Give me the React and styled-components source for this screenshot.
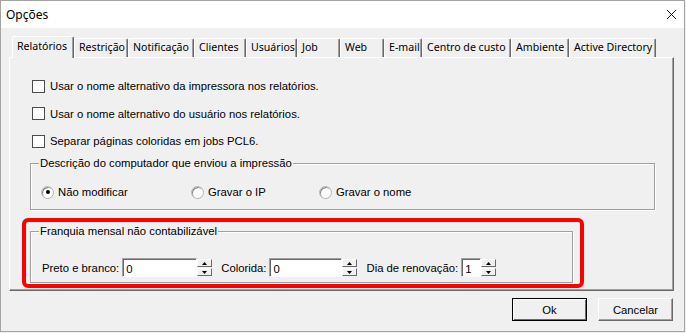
import React from 'react'
import styled, { createGlobalStyle } from 'styled-components'

const GlobalStyle = createGlobalStyle`
  html, body {
    margin: 0;
    padding: 0;
    background: #f0f0f0;
  }
`

const tabs = [
  { id: 'rel', label: 'Relatórios', width: 62, active: true },
  { id: 'res', label: 'Restrição', width: 54 },
  { id: 'not', label: 'Notificação', width: 66 },
  { id: 'cli', label: 'Clientes', width: 52 },
  { id: 'usu', label: 'Usuários', width: 51 },
  { id: 'job', label: 'Job', width: 43 },
  { id: 'web', label: 'Web', width: 44 },
  { id: 'mail', label: 'E-mail', width: 38 },
  { id: 'cc', label: 'Centro de custo', width: 89 },
  { id: 'amb', label: 'Ambiente', width: 58 },
  { id: 'ad', label: 'Active Directory', width: 87 }
]

const checks = [
  'Usar o nome alternativo da impressora nos relatórios.',
  'Usar o nome alternativo do usuário nos relatórios.',
  'Separar páginas coloridas em jobs PCL6.'
]

const radios = [
  { id: 'keep', label: 'Não modificar', checked: true, width: 150 },
  { id: 'ip', label: 'Gravar o IP', width: 128 },
  { id: 'name', label: 'Gravar o nome', width: 120 }
]

const App = () => (
  <>
    <GlobalStyle />
    <Window>
      <TitleBar>
        <Title>Opções</Title>
        <CloseIcon viewBox='0 0 12 12'>
          <path d='M1 1 L11 11 M11 1 L1 11' stroke='#000' strokeWidth='1' />
        </CloseIcon>
      </TitleBar>

      <Body>
        <TabStrip>
          {tabs.map((tab) => (
            <Tab key={tab.id} $active={tab.active} style={{ width: tab.width }}>
              {tab.label}
            </Tab>
          ))}
        </TabStrip>

        <Panel>
          {checks.map((text) => (
            <CheckRow key={text}>
              <CheckBox />
              <span>{text}</span>
            </CheckRow>
          ))}

          <GroupBox $mt={8}>
            <Legend>Descrição do computador que enviou a impressão</Legend>
            <RadioRow>
              {radios.map((r) => (
                <RadioItem key={r.id} style={{ width: r.width }}>
                  <Radio $checked={r.checked} />
                  <span>{r.label}</span>
                </RadioItem>
              ))}
            </RadioRow>
          </GroupBox>

          <Highlight>
            <GroupBox $width={543}>
              <Legend>Franquia mensal não contabilizável</Legend>
              <SpinRow>
                <FieldLabel>Preto e branco:</FieldLabel>
                <Spinner value='0' width={75} />
                <FieldLabel>Colorida:</FieldLabel>
                <Spinner value='0' width={73} />
                <FieldLabel>Dia de renovação:</FieldLabel>
                <Spinner value='1' width={20} />
              </SpinRow>
            </GroupBox>
          </Highlight>
        </Panel>

        <Footer>
          <Button $default>Ok</Button>
          <Button>Cancelar</Button>
        </Footer>
      </Body>
    </Window>
  </>
)

const Spinner = ({ value, width }) => (
  <SpinWrap>
    <SpinInput style={{ width }}>{value}</SpinInput>
    <SpinButtons>
      <SpinButton>
        <Arrow viewBox='0 0 5 3'><path d='M2.5 0 L5 3 L0 3 Z' fill='#000' /></Arrow>
      </SpinButton>
      <SpinButton>
        <Arrow viewBox='0 0 5 3'><path d='M0 0 L5 0 L2.5 3 Z' fill='#000' /></Arrow>
      </SpinButton>
    </SpinButtons>
  </SpinWrap>
)

const Window = styled.div`
  width: 685px;
  height: 332px;
  box-sizing: border-box;
  border: 1px solid #a3a3a3;
  background: #f0f0f0;
  display: flex;
  flex-direction: column;
  font-family: 'Liberation Sans', Arial, sans-serif;
  font-size: 11.3px;
  color: #000;
  overflow: hidden;
`

const TitleBar = styled.div`
  height: 27px;
  background: #fff;
  display: flex;
  align-items: center;
  justify-content: space-between;
  padding: 0 7px 0 5px;
`

const Title = styled.span`
  font-family: 'Noto Sans', sans-serif;
  font-size: 12px;
`

const CloseIcon = styled.svg`
  width: 11px;
  height: 11px;
`

const Body = styled.div`
  flex: 1;
  display: flex;
  flex-direction: column;
  padding: 8px 10px 0 8px;
`

const TabStrip = styled.div`
  display: flex;
  align-items: flex-end;
  height: 21px;
  padding-left: 3px;
`

const Tab = styled.div`
  box-sizing: border-box;
  height: ${(p) => (p.$active ? '22px' : '19px')};
  padding: ${(p) => (p.$active ? '2px 0 0 4px' : '1px 0 0 4px')};
  font-family: 'Noto Sans', sans-serif;
  font-size: 10.6px;
  white-space: nowrap;
  background: #f0f0f0;
  border-top: 1px solid #fff;
  border-left: 1px solid #fff;
  border-right: 1px solid #696969;
  border-radius: 2px 2px 0 0;
  box-shadow: inset -1px 0 0 #a0a0a0;
  position: relative;
  z-index: ${(p) => (p.$active ? 1 : 0)};
  margin-bottom: ${(p) => (p.$active ? '-1px' : '0')};
`

const Panel = styled.div`
  height: 234px;
  box-sizing: border-box;
  border-top: 1px solid #fff;
  border-left: 1px solid #fff;
  border-right: 1px solid #696969;
  border-bottom: 1px solid #696969;
  box-shadow: inset -1px -1px 0 #a0a0a0;
  padding: 21px 18px 0 20px;
  display: flex;
  flex-direction: column;
`

const CheckRow = styled.label`
  display: flex;
  align-items: center;
  gap: 5px;
  height: 14px;
  margin: 0 0 13.5px 2px;

  &:nth-child(3) {
    margin-bottom: 0;
  }
`

const CheckBox = styled.span`
  width: 11px;
  height: 11px;
  background: #fff;
  border: 1px solid #4d4d4d;
  flex: none;
`

const GroupBox = styled.fieldset`
  margin: ${(p) => p.$mt || 0}px 0 0 0;
  padding: 0 0 0 10px;
  width: ${(p) => (p.$width ? `${p.$width}px` : 'auto')};
  box-sizing: border-box;
  border: 1px solid #a0a0a0;
  box-shadow: 1px 1px 0 #fff, inset 1px 1px 0 #fff;
`

const Legend = styled.legend`
  padding: 0 1px;
  margin-left: -2px;
  background: #f0f0f0;
  line-height: 14px;
`

const RadioRow = styled.div`
  display: flex;
  height: 14px;
  align-items: center;
  margin: 15px 0 10px 0;
`

const RadioItem = styled.label`
  display: flex;
  align-items: center;
  gap: 4px;
`

const Radio = styled.span`
  width: 11px;
  height: 11px;
  border-radius: 50%;
  background: #fff;
  border: 1px solid #b5b5b5;
  box-shadow: inset 1px 1px 0 #8a8a8a;
  display: flex;
  align-items: center;
  justify-content: center;
  flex: none;

  &::after {
    content: '';
    width: 4px;
    height: 4px;
    border-radius: 50%;
    background: ${(p) => (p.$checked ? '#000' : 'transparent')};
  }
`

const Highlight = styled.div`
  align-self: flex-start;
  margin: 8px 0 0 -8px;
  padding: 2px 7px 1px 4px;
  border: 4px solid #f00;
  border-radius: 6px;
`

const SpinRow = styled.div`
  display: flex;
  align-items: center;
  height: 19px;
  margin: 20px 0 5px 1px;
`

const FieldLabel = styled.span`
  margin: 0 3px 0 9px;

  &:first-child {
    margin-left: 0;
  }
`

const SpinWrap = styled.div`
  display: flex;
  align-items: stretch;
  height: 19px;
`

const SpinInput = styled.div`
  box-sizing: border-box;
  background: #fff;
  border-top: 1px solid #a0a0a0;
  border-left: 1px solid #a0a0a0;
  border-right: 1px solid #fff;
  border-bottom: 1px solid #fff;
  box-shadow: inset 1px 1px 0 #696969;
  padding: 4px 0 0 3px;
  line-height: 13px;
`

const SpinButtons = styled.div`
  width: 15px;
  display: flex;
  flex-direction: column;
  gap: 1px;
  padding: 1px 0;
  box-sizing: border-box;
`

const SpinButton = styled.div`
  flex: 1;
  box-sizing: border-box;
  background: #f0f0f0;
  border-top: 1px solid #fff;
  border-left: 1px solid #fff;
  border-right: 1px solid #696969;
  border-bottom: 1px solid #696969;
  display: flex;
  align-items: center;
  justify-content: center;
`

const Arrow = styled.svg`
  width: 5px;
  height: 3px;
`

const Footer = styled.div`
  display: flex;
  justify-content: flex-end;
  gap: 11px;
  padding: 7px 1px 0 0;
`

const Button = styled.div`
  width: 75px;
  height: 23px;
  box-sizing: border-box;
  display: flex;
  align-items: center;
  justify-content: center;
  background: #f0f0f0;
  border: 1px solid ${(p) => (p.$default ? '#000' : '#fff')};
  border-right-color: ${(p) => (p.$default ? '#000' : '#696969')};
  border-bottom-color: ${(p) => (p.$default ? '#000' : '#696969')};
  box-shadow: ${(p) => (p.$default
    ? 'inset 1px 1px 0 #fff, inset -1px -1px 0 #696969'
    : 'inset -1px -1px 0 #a0a0a0')};
`

export default App
